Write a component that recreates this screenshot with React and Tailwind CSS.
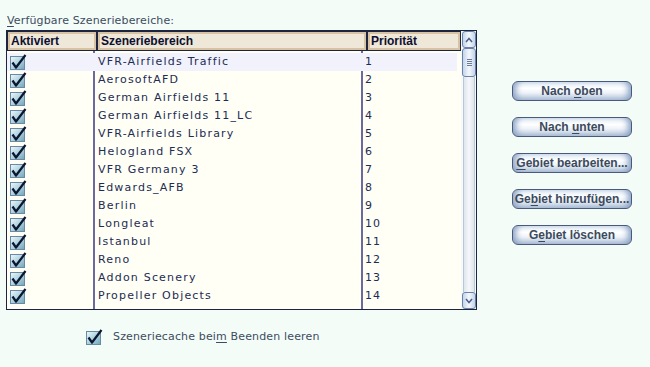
// Szeneriebibliothek - scenery list dialog
const rows = [
  "VFR-Airfields Traffic",
  "AerosoftAFD",
  "German Airfields 11",
  "German Airfields 11_LC",
  "VFR-Airfields Library",
  "Helogland FSX",
  "VFR Germany 3",
  "Edwards_AFB",
  "Berlin",
  "Longleat",
  "Istanbul",
  "Reno",
  "Addon Scenery",
  "Propeller Objects",
];

function Check() {
  return (
    <svg width="17" height="16" viewBox="0 0 17 16">
      <defs>
        <linearGradient id="cb" x1="0" y1="0" x2="1" y2="1">
          <stop offset="0" stopColor="#eef8fb" />
          <stop offset="0.55" stopColor="#a9d0dc" />
          <stop offset="1" stopColor="#6fa4b8" />
        </linearGradient>
      </defs>
      <rect x="0.5" y="2.5" width="14" height="13" fill="url(#cb)" stroke="#6a8aa4" />
      <path
        d="M2.5 8.5 L6 13.5 L15.5 1"
        fill="none"
        stroke="#0c1630"
        strokeWidth="2.2"
        strokeLinejoin="round"
      />
    </svg>
  );
}

function HeaderCell({ w, children }) {
  return (
    <div
      className={`${w} h-[20px] border border-[#1c2440] bg-[#efe7d8] shadow-[inset_0_0_0_2px_#d7c3a3] flex items-center pl-[3px] font-['Liberation_Sans',Arial,sans-serif] text-[12px] font-bold text-[#0c1030]`}
    >
      {children}
    </div>
  );
}

function Button({ children }) {
  return (
    <div className="w-[120px] h-[20px] rounded-[6px] border border-[#4a5a7c] bg-[linear-gradient(to_bottom,#dde8f4,#ffffff_35%,#eef3f9_60%,#aebfd6)] shadow-[inset_7px_0_6px_-4px_#8aa2c4,inset_-7px_0_6px_-4px_#8aa2c4] flex items-center justify-center font-['Liberation_Sans',Arial,sans-serif] text-[12px] font-bold text-[#3c4a5c] whitespace-nowrap">
      <span>{children}</span>
    </div>
  );
}

function ScrollBar() {
  return (
    <div className="w-[15px] flex flex-col bg-[#f7faf9] pl-[1px]">
      <div className="h-[17px] rounded-[3px] border border-[#6a82a8] bg-[linear-gradient(to_right,#c4d4ea,#f4f8fc,#c4d4ea)] flex items-center justify-center">
        <svg width="8" height="6" viewBox="0 0 8 6">
          <path d="M1 5 L4 1.5 L7 5" fill="none" stroke="#4a6088" strokeWidth="1.5" />
        </svg>
      </div>
      <div className="h-[29px] rounded-[3px] border border-[#6a82a8] bg-[linear-gradient(to_right,#c4d4ea,#f4f8fc,#c4d4ea)] flex flex-col items-center justify-center gap-[1px]">
        <div className="w-[5px] h-[1px] bg-[#6a7c98]" />
        <div className="w-[5px] h-[1px] bg-[#6a7c98]" />
        <div className="w-[5px] h-[1px] bg-[#6a7c98]" />
        <div className="w-[5px] h-[1px] bg-[#6a7c98]" />
      </div>
      <div className="flex-1 mx-[1px] border-x border-[#b8c6da] bg-[linear-gradient(to_right,#dfe6ee,#f6f8fa,#dfe6ee)]" />
      <div className="h-[17px] rounded-[3px] border border-[#6a82a8] bg-[linear-gradient(to_right,#c4d4ea,#f4f8fc,#c4d4ea)] flex items-center justify-center">
        <svg width="8" height="6" viewBox="0 0 8 6">
          <path d="M1 1 L4 4.5 L7 1" fill="none" stroke="#4a6088" strokeWidth="1.5" />
        </svg>
      </div>
    </div>
  );
}

function Spacer({ className }) {
  return (
    <div className={`flex ${className}`}>
      <div className="w-[88px] border-r-2 border-[#6a6a9e]" />
      <div className="w-[268px] border-r-2 border-[#6a6a9e]" />
      <div className="flex-1" />
    </div>
  );
}

export default function App() {
  return (
    <div className="w-[650px] h-[367px] bg-[#f4fcf8] font-['DejaVu_Sans',Verdana,sans-serif] text-[11px] overflow-hidden">
      <div className="pt-[14px] pl-[7px] h-[30px] text-[#3c4c5e] leading-[13px] tracking-[0.15px]">
        <span className="underline underline-offset-[2px]">V</span>erfügbare Szeneriebereiche:
      </div>

      <div className="flex">
        <div className="ml-[6px] w-[471px] h-[280px] border border-[#1c2440] bg-[#fffff6] flex">
          <div className="w-[454px] flex flex-col">
            <div className="flex">
              <HeaderCell w="w-[90px]">Aktiviert</HeaderCell>
              <HeaderCell w="w-[270px]">Szeneriebereich</HeaderCell>
              <HeaderCell w="w-[94px]">Priorität</HeaderCell>
            </div>
            <Spacer className="h-[2px]" />
            {rows.map((name, i) => (
              <div
                key={name}
                className={`flex h-[18px] items-center text-[#1c2c54] ${i === 0 ? "bg-[#f2f2fc] mr-[4px]" : ""}`}
              >
                <div className={`w-[88px] h-full border-r-2 flex items-center pl-[3px] ${i === 0 ? "border-[#f2f2fc]" : "border-[#6a6a9e]"}`}>
                  <Check />
                </div>
                <div className={`w-[268px] h-full border-r-2 flex items-center pl-[3px] tracking-[1.2px] ${i === 0 ? "border-[#f2f2fc]" : "border-[#6a6a9e]"}`}>
                  {name}
                </div>
                <div className="flex-1 pl-[2px] tracking-[1px]">{i + 1}</div>
              </div>
            ))}
            <Spacer className="flex-1" />
          </div>
          <ScrollBar />
        </div>

        <div className="ml-[35px] pt-[51px] flex flex-col gap-[16px]">
          <Button>
            Nach <span className="underline underline-offset-[2px]">o</span>ben
          </Button>
          <Button>
            Nach <span className="underline underline-offset-[2px]">u</span>nten
          </Button>
          <Button>
            <span className="underline underline-offset-[2px]">G</span>ebiet bearbeiten...
          </Button>
          <Button>
            Ge<span className="underline underline-offset-[2px]">b</span>iet hinzufügen...
          </Button>
          <Button>
            G<span className="underline underline-offset-[2px]">e</span>biet löschen
          </Button>
        </div>
      </div>

      <div className="flex items-center mt-[19px] ml-[86px] gap-[10px] text-[#3c4c5e] tracking-[0.15px]">
        <Check />
        <span>
          Szeneriecache bei<span className="underline underline-offset-[2px]">m</span> Beenden leeren
        </span>
      </div>
    </div>
  );
}
